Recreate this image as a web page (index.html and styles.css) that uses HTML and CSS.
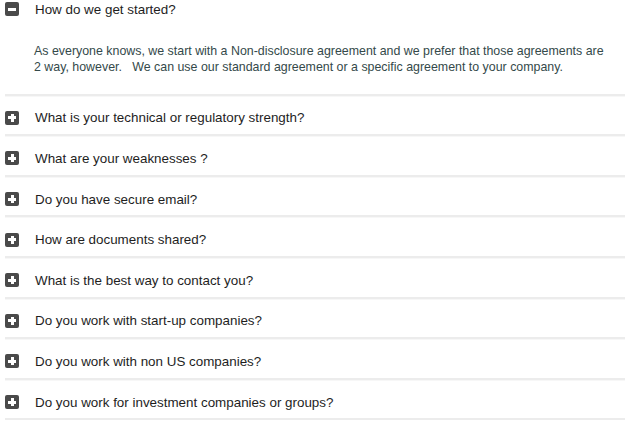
FILE: index.html
```html
<!DOCTYPE html>
<html>
<head>
<meta charset="utf-8">
<link rel="stylesheet" href="styles.css">
</head>
<body>
<div class="faq">
  <div class="item open">
    <div class="q"><span class="icon minus"></span><span class="qt">How do we get started?</span></div>
    <div class="a">As everyone knows, we start with a Non-disclosure agreement and we prefer that those agreements are 2 way, however.&nbsp;&nbsp; We can use our standard agreement or a specific agreement to your company.</div>
  </div>
  <div class="item"><div class="q"><span class="icon plus"></span><span class="qt">What is your technical or regulatory strength?</span></div></div>
  <div class="item"><div class="q"><span class="icon plus"></span><span class="qt">What are your weaknesses ?</span></div></div>
  <div class="item"><div class="q"><span class="icon plus"></span><span class="qt">Do you have secure email?</span></div></div>
  <div class="item"><div class="q"><span class="icon plus"></span><span class="qt">How are documents shared?</span></div></div>
  <div class="item"><div class="q"><span class="icon plus"></span><span class="qt">What is the best way to contact you?</span></div></div>
  <div class="item"><div class="q"><span class="icon plus"></span><span class="qt">Do you work with start-up companies?</span></div></div>
  <div class="item"><div class="q"><span class="icon plus"></span><span class="qt">Do you work with non US companies?</span></div></div>
  <div class="item"><div class="q"><span class="icon plus"></span><span class="qt">Do you work for investment companies or groups?</span></div></div>
</div>
</body>
</html>
```
FILE: styles.css
```css
html, body {
  margin: 0;
  padding: 0;
  background: #fff;
}
body {
  font-family: "Liberation Sans", Arial, sans-serif;
}
.faq {
  margin: 0 6px 0 5px;
}
.item {
  border-bottom: 2px solid #ececec;
  box-shadow: 0 1px 0 #f7f7f7;
}
.q {
  display: flex;
  align-items: center;
  height: 16.6px;
  padding: 14px 0 8px;
  font-size: 13.4px;
  color: #1e1e1e;
}
.open .q {
  padding-top: 1px;
}
.icon {
  position: relative;
  width: 14px;
  height: 14px;
  border-radius: 2px;
  background: #4a4a4a;
  margin-right: 16px;
  flex: none;
}
.icon::before, .icon::after {
  content: "";
  position: absolute;
  background: #fff;
}
.icon::before {
  left: 3px;
  top: 5.5px;
  width: 8px;
  height: 3px;
}
.plus::after {
  left: 5.5px;
  top: 3px;
  width: 3px;
  height: 8px;
}
.a {
  max-width: 578px;
  padding: 17px 0 18px 29px;
  font-size: 12.4px;
  line-height: 16.5px;
  color: #34494a;
}
```
